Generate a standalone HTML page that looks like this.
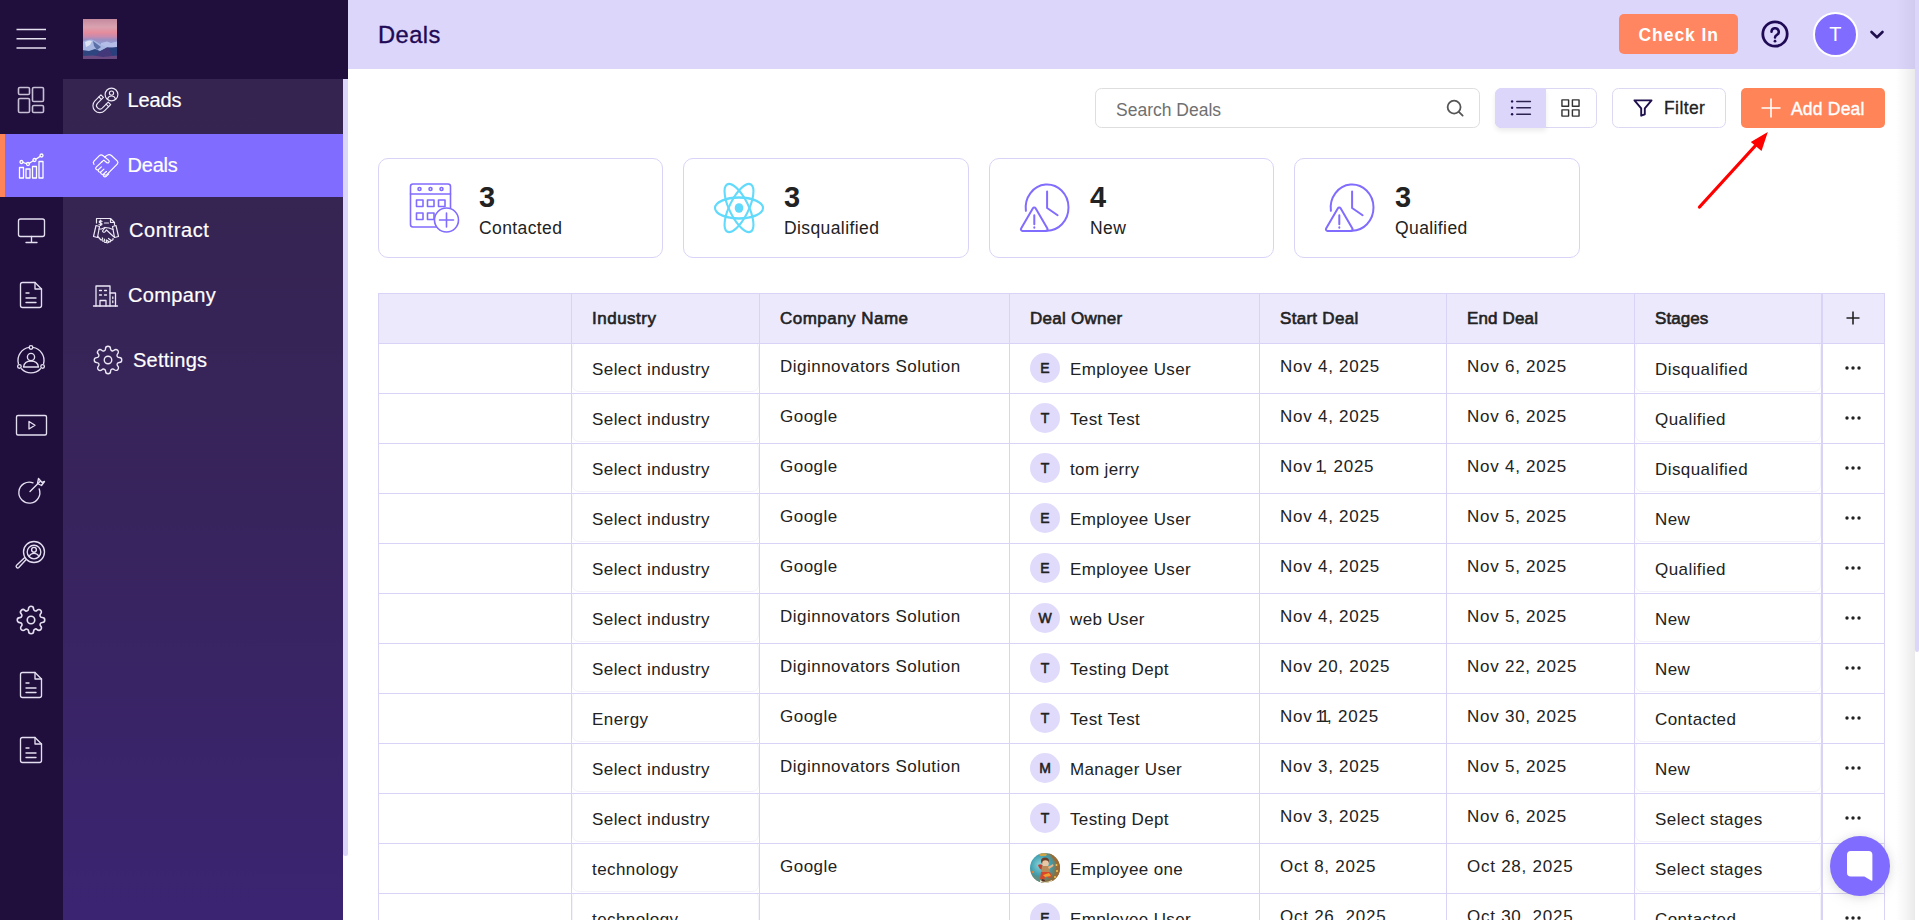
<!DOCTYPE html>
<html>
<head>
<meta charset="utf-8">
<title>Deals</title>
<style>
*{box-sizing:border-box;margin:0;padding:0}
html,body{width:1919px;height:920px;overflow:hidden;background:#fff;font-family:"Liberation Sans",sans-serif;color:#222}
body{position:relative}
.abs{position:absolute}
svg{display:block;overflow:visible}
/* ---------- left rail ---------- */
#rail{position:absolute;left:0;top:0;width:348px;height:920px;background:#200f3d}
#sub{position:absolute;left:63px;top:79px;width:280px;height:841px;background:linear-gradient(180deg,#35244f 0%,#38245c 50%,#3b2472 100%)}
#substrip{position:absolute;left:343px;top:79px;width:5px;height:841px;background:#fff}
#substrip i{position:absolute;left:0;top:0;width:5px;height:777px;background:#dcd6fa;border-radius:0 0 3px 3px}
#active{position:absolute;left:0;top:134px;width:343px;height:63px;background:#806cfe}
#active i{position:absolute;left:0;top:0;width:5px;height:63px;background:#ff8559}
.ri{position:absolute;left:16px;width:30px;height:30px}
.ri svg{width:30px;height:30px;fill:none;stroke:#e4dff0;stroke-width:1.35;stroke-linecap:round;stroke-linejoin:round}
.mi{position:absolute;color:#fff;font-size:20px;line-height:24px;white-space:nowrap;-webkit-text-stroke:0.2px #fff}
.mic{position:absolute;width:28px;height:28px}
.mic svg{width:28px;height:28px;fill:none;stroke:#ece8f6;stroke-width:1.25;stroke-linecap:round;stroke-linejoin:round}
/* ---------- header ---------- */
#hdr{position:absolute;left:348px;top:0;width:1567px;height:69px;background:#dcd6fa}
#title{position:absolute;left:378px;top:20px;font-size:23.700px;line-height:30px;color:#1f0a56;-webkit-text-stroke:0.350px #1f0a56;letter-spacing:.450px}
#checkin{position:absolute;left:1619px;top:14px;width:119px;height:40px;border-radius:5px;background:#ff8660;color:#fff;font-weight:bold;font-size:17.500px;line-height:42px;text-align:center;letter-spacing:.950px;padding-left:.500px}
#avatar{position:absolute;left:1812.800px;top:11.800px;width:45px;height:45px;border-radius:50%;background:#806cfe;border:2.500px solid #fff;color:#fff;font-size:20px;line-height:40px;text-align:center}
/* ---------- toolbar ---------- */
.box{position:absolute;top:88px;height:40px;border:1px solid #dcd8f3;border-radius:6.500px;background:#fff}
#search{left:1095px;width:385px;border-color:#dedede}
#search span{position:absolute;left:20px;top:10px;font-size:17.5px;line-height:22px;color:#707070}
#toggle{left:1495px;width:102px}
#toggle i{position:absolute;left:-1px;top:-1px;width:50.500px;height:40px;background:#dcd6fa;border-radius:6.500px 0 0 6.500px;box-shadow:0 3px 5px rgba(0,0,0,.08)}
#filter{left:1612px;width:114px}
#filter span{position:absolute;left:51px;top:8px;font-size:17.5px;line-height:22px;color:#222;-webkit-text-stroke:0.3px #222;letter-spacing:.4px}
#add{position:absolute;left:1741px;top:88px;width:144px;height:40px;border-radius:5px;background:#ff8559}
#add span{position:absolute;left:50px;top:9.600px;font-size:17.5px;line-height:22px;color:#fff;-webkit-text-stroke:0.4px #fff;letter-spacing:.2px}
/* ---------- cards ---------- */
.card{position:absolute;top:158px;width:285.200px;height:100px;border:1px solid #d9d3f8;border-radius:10px;background:#fff}
.card b{position:absolute;left:100px;top:21px;font-size:29px;line-height:34px;color:#222}
.card span{position:absolute;left:100px;top:57.700px;font-size:17.5px;line-height:22px;color:#222;letter-spacing:.4px}
.card svg{position:absolute;left:30px;top:24px;width:52px;height:52px;fill:none;stroke:#806cfe;stroke-width:1.6;stroke-linecap:round;stroke-linejoin:round}
/* ---------- table ---------- */
#tbl{position:absolute;left:378px;top:293px;width:1506px;border-collapse:collapse;table-layout:fixed;font-size:17px;letter-spacing:.43px}
#tbl th,#tbl td{border:1px solid #d9d3f8;height:50px;text-align:left;padding:0 0 0 20px;white-space:nowrap;overflow:hidden;vertical-align:middle;color:#222}
#tbl th{background:#ece9fc;font-weight:normal;-webkit-text-stroke:.6px #222;font-size:17px;color:#222;letter-spacing:0}
#tbl td.c{padding-bottom:3px;letter-spacing:.48px}
#tbl td.d{padding-bottom:3px;letter-spacing:.75px}
#tbl td.d u{text-decoration:none;letter-spacing:-2.300px;margin-left:-2.600px}
#tbl td.s{padding-top:2px;position:relative}
#tbl td.s:after{content:"";position:absolute;left:0;right:0;top:-3px;bottom:1.500px;border:1px solid #f4f3fa;border-radius:7px}
#tbl .dots{padding:0 0 2px 0;text-align:center;border-left:2px solid #d9d3f8}
#tbl .dots svg{margin:0 auto}
.av{display:inline-block;width:30px;height:30px;border-radius:50%;background:#e0dbfa;font-size:14px;font-weight:normal;-webkit-text-stroke:.55px #222;letter-spacing:0;line-height:30px;position:relative;top:-.5px;text-align:center;vertical-align:middle;margin-right:10px;color:#222}
.avi{display:inline-block;vertical-align:middle;margin-right:10px;position:relative;top:-.5px}
.nm{vertical-align:middle;display:inline-block;padding-top:3px;letter-spacing:.37px}
/* ---------- misc ---------- */
#rshadow{position:absolute;left:1896px;top:69px;width:19px;height:851px;background:linear-gradient(90deg,rgba(255,255,255,0) 0%,#f6f6f6 50%,#eaeaea 100%)}
#hshadow{position:absolute;left:1896px;top:0;width:19px;height:69px;background:linear-gradient(90deg,rgba(220,214,250,0) 0%,#d2cbf0 100%)}
#scroll{position:absolute;left:1915px;top:0;width:4px;height:920px;background:#fff}
#scroll i{position:absolute;left:0;top:0;width:4px;height:652px;background:#dcd6fa;border-radius:0 0 3px 3px}
#chat{position:absolute;left:1830px;top:836px;width:60px;height:60px;border-radius:50%;background:#806cfe;box-shadow:0 1px 10px rgba(0,0,0,.10),0 3px 18px rgba(0,0,0,.06)}
</style>
</head>
<body>
<!-- LEFT -->
<div id="rail"></div>
<div id="sub"></div>
<div id="substrip"><i></i></div>
<div id="active"><i></i></div>
<!--RAIL_START-->
<svg class="abs" style="left:16px;top:28px" width="31" height="21" viewBox="0 0 31 21"><path d="M0.5 1.5H30M0.5 10.8H30M0.5 20H30" stroke="#e4e0ee" stroke-width="1.5" fill="none"/></svg>
<svg class="abs" style="left:83px;top:19px;overflow:hidden" width="34" height="40" viewBox="0 0 34 40">
<defs><linearGradient id="sky" x1="0" y1="0" x2="0" y2="1"><stop offset="0" stop-color="#c48a9f"/><stop offset="0.200" stop-color="#d9a2b0"/><stop offset="0.340" stop-color="#e58c9c"/><stop offset="0.440" stop-color="#c88aae"/><stop offset="0.520" stop-color="#9a8ec2"/><stop offset="0.620" stop-color="#8f9bd0"/><stop offset="1" stop-color="#8f9bd0"/></linearGradient><filter id="lb" x="-10%" y="-10%" width="120%" height="120%"><feGaussianBlur stdDeviation="0.500"/></filter></defs>
<rect width="34" height="40" fill="url(#sky)"/>
<g filter="url(#lb)">
<path d="M18 24L24 22.500L28 24L34 22.500V32H18Z" fill="#b4bde8"/>
<path d="M-1 23L4 21L8.500 20.500L12 22L16 24.500L21 27L26 29L34 29V41H-1Z" fill="#a8b6e2"/>
<path d="M2 23L6 21.500L9 22L7 26L3 28Z" fill="#dfe4f4"/>
<path d="M10 22L14 25L18 28L14 31L11 27Z" fill="#5a6fa6"/>
<path d="M-1 31L6 32L12 30L17 32L24 28.500L34 29V41H-1Z" fill="#2f4580"/>
<path d="M15 34L24 28.500L30 29L34 28.500V41H10Z" fill="#43397a"/>
<path d="M26 29L34 28V40L30 38Z" fill="#2a3f7c"/>
<path d="M-1 37L10 36.500L20 38L34 36.500V41H-1Z" fill="#6a4a80"/>
</g>
</svg>
<!-- dashboard -->
<div class="ri" style="top:85px"><svg viewBox="0 0 30 30" style="stroke:#c6bfd6;stroke-width:1.600"><rect x="2.5" y="2.5" width="11" height="7" rx="1.3"/><rect x="16.5" y="2.5" width="11" height="14" rx="1.3"/><rect x="2.5" y="13.5" width="11" height="14" rx="1.3"/><rect x="16.5" y="20.5" width="11" height="7" rx="1.3"/></svg></div>
<!-- chart -->
<div class="ri" style="top:149.500px"><svg viewBox="0 0 30 30" style="stroke:#fff;stroke-width:1.3"><rect x="3.5" y="17.5" width="4" height="10.5"/><rect x="10" y="19" width="4" height="9"/><rect x="16.5" y="16.5" width="4" height="11.5"/><rect x="23" y="11.5" width="4" height="16.5"/><circle cx="5.5" cy="12" r="1.5"/><circle cx="12" cy="14" r="1.5"/><circle cx="18.5" cy="10" r="1.5"/><circle cx="25.5" cy="5.5" r="1.5"/><path d="M7 12.5L10.5 13.6M13.3 13.2L17.2 10.8M19.8 9.2L24.2 6.4"/></svg></div>
<!-- monitor -->
<div class="ri" style="top:215px"><svg viewBox="0 0 30 30"><rect x="2.5" y="4" width="26" height="17.5" rx="2"/><path d="M15.5 21.5V27.5M10 27.5H21"/></svg></div>
<!-- doc -->
<div class="ri" style="top:280px"><svg viewBox="0 0 30 30"><path d="M6.5 2.5H19L25.5 9V25.5a2 2 0 0 1-2 2H6.5a2 2 0 0 1-2-2V4.5a2 2 0 0 1 2-2Z"/><path d="M19 2.5V9H25.5"/><path d="M10 13H13M10 18H20M10 22.5H20"/></svg></div>
<!-- user orbit -->
<div class="ri" style="top:345px"><svg viewBox="0 0 30 30"><path d="M16.8 2.4A13 13 0 0 1 27.6 18.5M24.5 23.8A13 13 0 0 1 5.5 23.8M2.4 18.5A13 13 0 0 1 13.2 2.4"/><circle cx="15" cy="2.4" r="1.8"/><circle cx="26.6" cy="21.4" r="1.8"/><circle cx="3.4" cy="21.4" r="1.8"/><circle cx="15" cy="12" r="3.6"/><path d="M7.5 22c.6-4 3.4-6 7.5-6s6.900 2 7.500 6Z"/></svg></div>
<!-- video -->
<div class="ri" style="top:410px"><svg viewBox="0 0 30 30"><rect x="0.500" y="5.500" width="30" height="19.500" rx="1.500"/><path d="M13 11.500L19 15.300L13 19Z"/></svg></div>
<!-- target -->
<div class="ri" style="top:475px"><svg viewBox="0 0 30 30"><path d="M17 7.800A10.500 10.500 0 1 0 23.200 14"/><path d="M14 16.500L24.500 6"/><path d="M21.500 8.500L22.500 3.500L26 7.500L28.500 6.500L25.500 10.500L21.500 8.500Z"/></svg></div>
<!-- search person -->
<div class="ri" style="top:540px"><svg viewBox="0 0 30 30"><circle cx="18" cy="12" r="10.500"/><circle cx="18" cy="12" r="6.800"/><circle cx="18" cy="9.800" r="2.400"/><path d="M13.200 16.700c.8-2.300 2.600-3.300 4.800-3.300s4 1 4.800 3.300"/><path d="M10.200 19.500L2.800 27.500a1.500 1.500 0 0 1-2.200-2.200L8.500 17.800"/></svg></div>
<!-- gear -->
<div class="ri" style="top:605px"><svg viewBox="0 0 24 24" style="stroke-width:1.300"><circle cx="12" cy="12" r="3"/><path d="M19.400 15a1.650 1.650 0 0 0 .33 1.820l.06.06a2 2 0 1 1-2.830 2.830l-.06-.06a1.650 1.650 0 0 0-1.820-.33 1.650 1.650 0 0 0-1 1.510V21a2 2 0 1 1-4 0v-.09A1.650 1.650 0 0 0 9 19.400a1.650 1.650 0 0 0-1.820.33l-.06.06a2 2 0 1 1-2.830-2.830l.06-.06a1.650 1.650 0 0 0 .33-1.820 1.650 1.650 0 0 0-1.510-1H3a2 2 0 1 1 0-4h.09A1.650 1.650 0 0 0 4.600 9a1.650 1.650 0 0 0-.33-1.820l-.06-.06a2 2 0 1 1 2.830-2.830l.06.06a1.650 1.650 0 0 0 1.820.33H9a1.650 1.650 0 0 0 1-1.510V3a2 2 0 1 1 4 0v.09a1.650 1.650 0 0 0 1 1.510 1.650 1.650 0 0 0 1.820-.33l.06-.06a2 2 0 1 1 2.830 2.830l-.06.06a1.650 1.650 0 0 0-.33 1.820V9a1.650 1.650 0 0 0 1.510 1H21a2 2 0 1 1 0 4h-.09a1.650 1.650 0 0 0-1.510 1z"/></svg></div>
<!-- doc2 -->
<div class="ri" style="top:670px"><svg viewBox="0 0 30 30"><path d="M6.500 2.500H19L25.500 9V25.500a2 2 0 0 1-2 2H6.500a2 2 0 0 1-2-2V4.500a2 2 0 0 1 2-2Z"/><path d="M19 2.500V9H25.500"/><path d="M10 13H13M10 18H20M10 22.500H20"/></svg></div>
<!-- doc3 -->
<div class="ri" style="top:735px"><svg viewBox="0 0 30 30"><path d="M6.500 2.500H19L25.500 9V25.500a2 2 0 0 1-2 2H6.500a2 2 0 0 1-2-2V4.500a2 2 0 0 1 2-2Z"/><path d="M19 2.500V9H25.500"/><path d="M10 13H13M10 18H20M10 22.500H20"/></svg></div>
<!--RAIL_END-->
<!--MENU_START-->
<!-- Leads -->
<div class="mic" style="left:92px;top:86px"><svg viewBox="0 0 28 28" style="stroke-width:1.150"><circle cx="19.500" cy="8.500" r="6.400"/><circle cx="19.500" cy="7.100" r="2.100"/><path d="M15.600 12.800c.6-1.900 2-2.800 3.900-2.800s3.300.9 3.900 2.800"/><path d="M8.930 8.810L2.920 14.820A6.900 6.900 0 0 0 12.680 24.580L18.690 18.570L16.210 16.090L10.200 22.100A3.400 3.400 0 0 1 5.400 17.300L11.410 11.290Z"/><path d="M6.810 10.930L9.290 13.410M16.570 20.690L14.090 18.210"/></svg></div>
<div class="mi" style="left:127.500px;top:88px;letter-spacing:-.1px">Leads</div>
<!-- Deals -->
<div class="mic" style="left:92px;top:151px"><svg viewBox="0 0 28 28" style="stroke:#fff;stroke-width:1.200"><g transform="translate(0 .260) scale(1 .920)"><path d="M2 14.200Q.6 12.400 2 10.800L7.400 4.800Q9 3.200 10.800 4.600L16.800 10Q17.800 11.200 16.800 12.200Q15.700 13.100 14.600 12.200L11.800 9.600L9.600 11.800"/><path d="M12.600 6.200L15.400 4.200Q17.400 2.800 19.400 4.600L25.200 10.400Q26.700 12.200 25.200 13.900L14.800 25.300Q13.500 26.500 12.200 25.300"/><path d="M10.400 11L4.200 17.200a1.750 1.750 0 0 0 2.500 2.500L9.400 17M6.700 19.700a1.750 1.750 0 0 0 2.500 2.500L11.900 19.500M9.200 22.200a1.750 1.750 0 0 0 2.500 2.500L14.400 22M11.700 24.700a1.750 1.750 0 0 0 2.500 2.500L16.800 24.600"/></g></svg></div>
<div class="mi" style="left:127.500px;top:153px;letter-spacing:-.2px">Deals</div>
<!-- Contract -->
<div class="mic" style="left:92px;top:216px"><svg viewBox="0 0 28 28" style="stroke-width:1.200"><path d="M4.500 7V2.500H18.500L22.500 6.500V9"/><path d="M18.500 2.500V6.500H22.500"/><path d="M8.500 4V9.500M10 5.300c-.5-.6-2.800-.8-2.800.6s2.800.7 2.800 2.100-2.400 1.300-3 .5"/><path d="M12.500 7H16.500"/><path d="M1.500 20.500L4 9.500L7.500 10.500L5.500 21.500Z"/><path d="M26.500 20.500L24 9.500L20.500 10.500L22.500 21.500Z"/><path d="M7 13H9.500L13 11.500L17 12L21 13.500"/><path d="M13 11.500L10.500 15a1.400 1.400 0 0 0 2.400.8L14.500 14L21.500 20.500"/><path d="M5.800 20.500L8.500 23.500M8.500 23.500a1.200 1.200 0 0 0 1.800-1.600M10.500 24.800a1.200 1.200 0 0 0 1.800-1.600M12.500 26a1.200 1.200 0 0 0 1.800-1.600M14.300 26.300c1 1 2.500.5 2.400-.8M16.700 25.500c1.200.8 2.500 0 2.200-1.300M18.900 24.200c1.300.6 2.600-.4 2.100-1.700M16.500 22.500L19 24.500M14.500 24L16.500 25.500"/></svg></div>
<div class="mi" style="left:129px;top:218px;letter-spacing:.6px">Contract</div>
<!-- Company -->
<div class="mic" style="left:92px;top:281px"><svg viewBox="0 0 28 28" style="stroke-width:1.300"><path d="M1.500 25H25.500"/><path d="M4 25V5H18V25"/><path d="M18 12H23.500V25"/><path d="M8 25V19.500H14V25"/><path d="M7.500 9.500H9.500M12.500 9.500H14.500M7.500 14H9.500M12.500 14H14.500M20.800 16V17.500M20.800 20V21.500"/></svg></div>
<div class="mi" style="left:128px;top:283px;letter-spacing:.35px">Company</div>
<!-- Settings -->
<div class="mic" style="left:93px;top:345px;width:30px;height:30px"><svg viewBox="0 0 24 24" style="width:30px;height:30px;stroke-width:1.100"><circle cx="12" cy="12" r="3"/><path d="M19.400 15a1.650 1.650 0 0 0 .33 1.820l.06.06a2 2 0 1 1-2.830 2.830l-.06-.06a1.650 1.650 0 0 0-1.820-.33 1.650 1.650 0 0 0-1 1.510V21a2 2 0 1 1-4 0v-.09A1.650 1.650 0 0 0 9 19.400a1.650 1.650 0 0 0-1.820.33l-.06.06a2 2 0 1 1-2.830-2.830l.06-.06a1.650 1.650 0 0 0 .33-1.820 1.650 1.650 0 0 0-1.510-1H3a2 2 0 1 1 0-4h.09A1.650 1.650 0 0 0 4.600 9a1.650 1.650 0 0 0-.33-1.820l-.06-.06a2 2 0 1 1 2.830-2.830l.06.06a1.650 1.650 0 0 0 1.820.33H9a1.650 1.650 0 0 0 1-1.510V3a2 2 0 1 1 4 0v.09a1.650 1.650 0 0 0 1 1.510 1.650 1.650 0 0 0 1.820-.33l.06-.06a2 2 0 1 1 2.830 2.830l-.06.06a1.650 1.650 0 0 0-.33 1.820V9a1.650 1.650 0 0 0 1.510 1H21a2 2 0 1 1 0 4h-.09a1.650 1.650 0 0 0-1.510 1z"/></svg></div>
<div class="mi" style="left:133px;top:348px;letter-spacing:.25px">Settings</div>
<!--MENU_END-->
<!-- HEADER -->
<div id="hdr"></div>
<div id="title">Deals</div>
<div id="checkin">Check In</div>
<!--HDRI_START-->
<svg class="abs" style="left:1760px;top:19px" width="30" height="30" viewBox="0 0 30 30"><circle cx="15" cy="15" r="12.200" fill="none" stroke="#1f0a56" stroke-width="2.800"/><path d="M11.500 12.800a3.600 3.600 0 1 1 5.400 3.100c-1.200.7-1.900 1.400-1.900 2.700" fill="none" stroke="#1f0a56" stroke-width="2.500" stroke-linecap="round"/><circle cx="15" cy="22.200" r="1.400" fill="#1f0a56"/></svg>
<svg class="abs" style="left:1869px;top:29.500px" width="16" height="10" viewBox="0 0 16 10"><path d="M2.500 2L8 7.300L13.500 2" fill="none" stroke="#1f0f4d" stroke-width="2.600" stroke-linecap="round" stroke-linejoin="round"/></svg>
<!--HDRI_END-->
<div id="avatar">T</div>
<!-- TOOLBAR -->
<div class="box" id="search"><span>Search Deals</span></div>
<div class="box" id="toggle"><i></i></div>
<div class="box" id="filter"><span>Filter</span></div>
<div id="add"><span>Add Deal</span></div>
<!--TOOLI_START-->
<!-- search icon -->
<svg class="abs" style="left:1446px;top:99px" width="18" height="18" viewBox="0 0 20 20"><circle cx="9" cy="9" r="7.200" fill="none" stroke="#555" stroke-width="2"/><path d="M14.300 14.300L18.500 18.500" stroke="#555" stroke-width="2" stroke-linecap="round"/></svg>
<!-- list icon -->
<svg class="abs" style="left:1510px;top:98px" width="22" height="20" viewBox="0 0 22 20"><path d="M6.800 3.400H20.400M6.800 9.800H20.400M6.800 16.200H20.400" stroke="#2c2350" stroke-width="1.500" stroke-linecap="round"/><circle cx="2.100" cy="3.400" r="1.200" fill="#1f0f4d"/><circle cx="2.100" cy="9.800" r="1.200" fill="#1f0f4d"/><circle cx="2.100" cy="16.200" r="1.200" fill="#1f0f4d"/></svg>
<!-- grid icon -->
<svg class="abs" style="left:1561.300px;top:98.900px" width="19" height="18" viewBox="0 0 20 20" preserveAspectRatio="none" fill="none" stroke="#333" stroke-width="1.500" stroke-linejoin="round"><rect x="1" y="1" width="7" height="7"/><rect x="12" y="1" width="7" height="7"/><rect x="1" y="12" width="7" height="7"/><rect x="12" y="12" width="7" height="7"/></svg>
<!-- filter icon -->
<svg class="abs" style="left:1633px;top:99px" width="20" height="18" viewBox="0 0 22 20"><path d="M1.500 1.500H20.500L13 10.500V17L9 18.500V10.500Z" fill="none" stroke="#1f0f4d" stroke-width="2.100" stroke-linejoin="round"/></svg>
<!-- plus -->
<svg class="abs" style="left:1761px;top:98px" width="20" height="20" viewBox="0 0 20 20"><path d="M10 0.500V19.500M0.500 10H19.500" stroke="#fff" stroke-width="1.600"/></svg>
<!--TOOLI_END-->
<!-- CARDS -->
<!--CARDS_START-->
<div class="card" style="left:378px;width:285px"><svg viewBox="0 0 52 52" style="top:23px"><rect x="1.500" y="2" width="40" height="43" rx="2.500"/><path d="M1.500 12H41.500"/><circle cx="10.500" cy="7" r="1.500"/><circle cx="21.500" cy="7" r="1.500"/><circle cx="32.500" cy="7" r="1.500"/><rect x="7.500" y="18" width="6.500" height="6.500"/><rect x="18.500" y="18" width="6.500" height="6.500"/><rect x="29.500" y="18" width="6.500" height="6.500"/><rect x="7.500" y="31" width="6.500" height="6.500"/><rect x="18.500" y="31" width="6.500" height="6.500"/><circle cx="37.500" cy="38" r="12" fill="#fff"/><path d="M37.500 31V45M30.500 38H44.500"/></svg><b>3</b><span>Contacted</span></div>
<div class="card" style="left:683px;width:286px"><svg viewBox="0 0 52 52" style="stroke:#61dafb;stroke-width:2.100;left:29.300px;top:23px;transform:scaleY(1.130)"><ellipse cx="26" cy="26" rx="24" ry="9.300"/><ellipse cx="26" cy="26" rx="24" ry="9.300" transform="rotate(60 26 26)"/><ellipse cx="26" cy="26" rx="24" ry="9.300" transform="rotate(120 26 26)"/><circle cx="26" cy="26" r="4.300" fill="#61dafb" stroke="none"/></svg><b>3</b><span>Disqualified</span></div>
<div class="card" style="left:989px;width:285px"><svg viewBox="0 0 52 52" style="stroke-width:2;left:29.300px;top:24px"><path d="M6.900 27.800A21.400 23.100 0 1 1 27 47.670"/><path d="M28.100 8.500V25L38.600 32.200"/><path d="M13.900 25.300L2.100 45.500a1.600 1.600 0 0 0 1.400 2.400H27a1.600 1.600 0 0 0 1.400-2.400L16.600 25.300a1.600 1.600 0 0 0-2.700 0Z"/><path d="M15.300 32.200V41.200M15.300 44.300V44.800"/></svg><b>4</b><span>New</span></div>
<div class="card" style="left:1294px;width:286px"><svg viewBox="0 0 52 52" style="stroke-width:2;left:29.300px;top:24px"><path d="M6.900 27.800A21.400 23.100 0 1 1 27 47.670"/><path d="M28.100 8.500V25L38.600 32.200"/><path d="M13.900 25.300L2.100 45.500a1.600 1.600 0 0 0 1.400 2.400H27a1.600 1.600 0 0 0 1.400-2.400L16.600 25.300a1.600 1.600 0 0 0-2.700 0Z"/><path d="M15.300 32.200V41.200M15.300 44.300V44.800"/></svg><b>3</b><span>Qualified</span></div>
<!--CARDS_END-->
<!-- TABLE -->
<!--TABLE_START-->
<table id="tbl"><colgroup><col style="width:193px"><col style="width:188px"><col style="width:250px"><col style="width:250px"><col style="width:187px"><col style="width:188px"><col style="width:187px"><col style="width:63px"></colgroup>
<tr><th></th><th style="letter-spacing:.5px">Industry</th><th style="letter-spacing:.47px">Company Name</th><th style="letter-spacing:.27px">Deal Owner</th><th style="letter-spacing:.29px">Start Deal</th><th style="letter-spacing:.15px">End Deal</th><th style="letter-spacing:.05px">Stages</th><th class="dots"><svg width="14" height="14" viewBox="0 0 14 14"><path d="M7 0.5V13.5M0.5 7H13.5" stroke="#222" stroke-width="1.6" fill="none"/></svg></th></tr>
<tr><td></td><td class="s">Select industry</td><td class="c">Diginnovators Solution</td><td><span class="av">E</span><span class="nm">Employee User</span></td><td class="d">Nov 4, 2025</td><td class="d">Nov 6, 2025</td><td class="s">Disqualified</td><td class="dots"><svg width="16" height="4" viewBox="0 0 16 4"><circle cx="2" cy="2" r="1.7" fill="#222"/><circle cx="8" cy="2" r="1.7" fill="#222"/><circle cx="14" cy="2" r="1.7" fill="#222"/></svg></td></tr>
<tr><td></td><td class="s">Select industry</td><td class="c">Google</td><td><span class="av">T</span><span class="nm">Test Test</span></td><td class="d">Nov 4, 2025</td><td class="d">Nov 6, 2025</td><td class="s">Qualified</td><td class="dots"><svg width="16" height="4" viewBox="0 0 16 4"><circle cx="2" cy="2" r="1.7" fill="#222"/><circle cx="8" cy="2" r="1.7" fill="#222"/><circle cx="14" cy="2" r="1.7" fill="#222"/></svg></td></tr>
<tr><td></td><td class="s">Select industry</td><td class="c">Google</td><td><span class="av">T</span><span class="nm">tom jerry</span></td><td class="d">Nov <u>1</u>, 2025</td><td class="d">Nov 4, 2025</td><td class="s">Disqualified</td><td class="dots"><svg width="16" height="4" viewBox="0 0 16 4"><circle cx="2" cy="2" r="1.7" fill="#222"/><circle cx="8" cy="2" r="1.7" fill="#222"/><circle cx="14" cy="2" r="1.7" fill="#222"/></svg></td></tr>
<tr><td></td><td class="s">Select industry</td><td class="c">Google</td><td><span class="av">E</span><span class="nm">Employee User</span></td><td class="d">Nov 4, 2025</td><td class="d">Nov 5, 2025</td><td class="s">New</td><td class="dots"><svg width="16" height="4" viewBox="0 0 16 4"><circle cx="2" cy="2" r="1.7" fill="#222"/><circle cx="8" cy="2" r="1.7" fill="#222"/><circle cx="14" cy="2" r="1.7" fill="#222"/></svg></td></tr>
<tr><td></td><td class="s">Select industry</td><td class="c">Google</td><td><span class="av">E</span><span class="nm">Employee User</span></td><td class="d">Nov 4, 2025</td><td class="d">Nov 5, 2025</td><td class="s">Qualified</td><td class="dots"><svg width="16" height="4" viewBox="0 0 16 4"><circle cx="2" cy="2" r="1.7" fill="#222"/><circle cx="8" cy="2" r="1.7" fill="#222"/><circle cx="14" cy="2" r="1.7" fill="#222"/></svg></td></tr>
<tr><td></td><td class="s">Select industry</td><td class="c">Diginnovators Solution</td><td><span class="av">W</span><span class="nm">web User</span></td><td class="d">Nov 4, 2025</td><td class="d">Nov 5, 2025</td><td class="s">New</td><td class="dots"><svg width="16" height="4" viewBox="0 0 16 4"><circle cx="2" cy="2" r="1.7" fill="#222"/><circle cx="8" cy="2" r="1.7" fill="#222"/><circle cx="14" cy="2" r="1.7" fill="#222"/></svg></td></tr>
<tr><td></td><td class="s">Select industry</td><td class="c">Diginnovators Solution</td><td><span class="av">T</span><span class="nm">Testing Dept</span></td><td class="d">Nov 20, 2025</td><td class="d">Nov 22, 2025</td><td class="s">New</td><td class="dots"><svg width="16" height="4" viewBox="0 0 16 4"><circle cx="2" cy="2" r="1.7" fill="#222"/><circle cx="8" cy="2" r="1.7" fill="#222"/><circle cx="14" cy="2" r="1.7" fill="#222"/></svg></td></tr>
<tr><td></td><td class="s">Energy</td><td class="c">Google</td><td><span class="av">T</span><span class="nm">Test Test</span></td><td class="d">Nov <u>1</u><u>1</u>, 2025</td><td class="d">Nov 30, 2025</td><td class="s">Contacted</td><td class="dots"><svg width="16" height="4" viewBox="0 0 16 4"><circle cx="2" cy="2" r="1.7" fill="#222"/><circle cx="8" cy="2" r="1.7" fill="#222"/><circle cx="14" cy="2" r="1.7" fill="#222"/></svg></td></tr>
<tr><td></td><td class="s">Select industry</td><td class="c">Diginnovators Solution</td><td><span class="av">M</span><span class="nm">Manager User</span></td><td class="d">Nov 3, 2025</td><td class="d">Nov 5, 2025</td><td class="s">New</td><td class="dots"><svg width="16" height="4" viewBox="0 0 16 4"><circle cx="2" cy="2" r="1.7" fill="#222"/><circle cx="8" cy="2" r="1.7" fill="#222"/><circle cx="14" cy="2" r="1.7" fill="#222"/></svg></td></tr>
<tr><td></td><td class="s">Select industry</td><td class="c"></td><td><span class="av">T</span><span class="nm">Testing Dept</span></td><td class="d">Nov 3, 2025</td><td class="d">Nov 6, 2025</td><td class="s">Select stages</td><td class="dots"><svg width="16" height="4" viewBox="0 0 16 4"><circle cx="2" cy="2" r="1.7" fill="#222"/><circle cx="8" cy="2" r="1.7" fill="#222"/><circle cx="14" cy="2" r="1.7" fill="#222"/></svg></td></tr>
<tr><td></td><td class="s">technology</td><td class="c">Google</td><td><svg class="avi" width="30" height="30" viewBox="0 0 30 30"><defs><clipPath id="avc"><circle cx="15" cy="15" r="15"/></clipPath><radialGradient id="avg" cx="0.35" cy="0.4" r="0.75"><stop offset="0" stop-color="#8fd6dc"/><stop offset="0.45" stop-color="#3f9fb0"/><stop offset="0.8" stop-color="#8a6a3a"/><stop offset="1" stop-color="#a8763a"/></radialGradient></defs><g clip-path="url(#avc)"><rect width="30" height="30" fill="url(#avg)"/><path d="M0 8L6 2L10 0H0Z" fill="#7a5a34"/><path d="M19 0H30V30H22Q27 20 26 10Z" fill="#9a6b35"/><circle cx="26.500" cy="12" r="1" fill="#f3c55a"/><circle cx="27" cy="18" r="1" fill="#f3c55a"/><circle cx="25" cy="24" r="1" fill="#f3c55a"/><circle cx="3" cy="19" r="1.200" fill="#d9843a"/><path d="M0 22L8 24L14 30H0Z" fill="#5d8f86"/><ellipse cx="15" cy="8" rx="4" ry="3.500" fill="#6b3f2a"/><ellipse cx="15.500" cy="10.500" rx="3.300" ry="3.300" fill="#e9c7a5"/><path d="M8 12Q11 10 13 13L12 17Q9 16 8 12Z" fill="#c23b2e"/><path d="M12 13H19L20 19H11Z" fill="#b98a5a"/><path d="M18 14L23 11L23.500 13L19 16Z" fill="#e2b58c"/><path d="M11 19H20L22 24L18 25L16 22L14 27L10 26Z" fill="#d9472b"/><path d="M13 22L19 20L21 23L15 24Z" fill="#f0a030"/><path d="M12 26L15 27L14 30H11Z" fill="#5a2f22"/><path d="M10 27Q15 31 22 27L22 30H10Z" fill="#e8e6c8"/><path d="M9 1Q13 -1 17 1L16 3H10Z" fill="#c9a24a"/></g></svg><span class="nm">Employee one</span></td><td class="d">Oct 8, 2025</td><td class="d">Oct 28, 2025</td><td class="s">Select stages</td><td class="dots"><svg width="16" height="4" viewBox="0 0 16 4"><circle cx="2" cy="2" r="1.7" fill="#222"/><circle cx="8" cy="2" r="1.7" fill="#222"/><circle cx="14" cy="2" r="1.7" fill="#222"/></svg></td></tr>
<tr><td></td><td class="s">technology</td><td class="c"></td><td><span class="av">E</span><span class="nm">Employee User</span></td><td class="d">Oct 26, 2025</td><td class="d">Oct 30, 2025</td><td class="s">Contacted</td><td class="dots"><svg width="16" height="4" viewBox="0 0 16 4"><circle cx="2" cy="2" r="1.7" fill="#222"/><circle cx="8" cy="2" r="1.7" fill="#222"/><circle cx="14" cy="2" r="1.7" fill="#222"/></svg></td></tr>
</table>
<!--TABLE_END-->
<!-- MISC -->
<div id="hshadow"></div>
<div id="rshadow"></div>
<div id="scroll"><i></i></div>
<div id="chat"></div>
<!--ARROW_START-->
<svg class="abs" style="left:1690px;top:125px" width="90" height="90" viewBox="1690 125 90 90"><path d="M1699.500 207L1756.500 144.500" stroke="#ff0000" stroke-width="3.300" stroke-linecap="round" fill="none"/><path d="M1767.800 132L1761.500 151L1750.800 142Z" fill="#ff0000"/></svg>
<svg class="abs" style="left:1847px;top:850.800px" width="25.400" height="30" viewBox="0 0 25.400 30"><path d="M3.800 0H21.600a3.800 3.800 0 0 1 3.800 3.800V29a.8.8 0 0 1-1.300.6L17.400 25.500H3.800a3.800 3.800 0 0 1-3.800-3.800V3.800a3.800 3.800 0 0 1 3.800-3.800Z" fill="#fff"/></svg>
<!--ARROW_END-->
</body>
</html>
